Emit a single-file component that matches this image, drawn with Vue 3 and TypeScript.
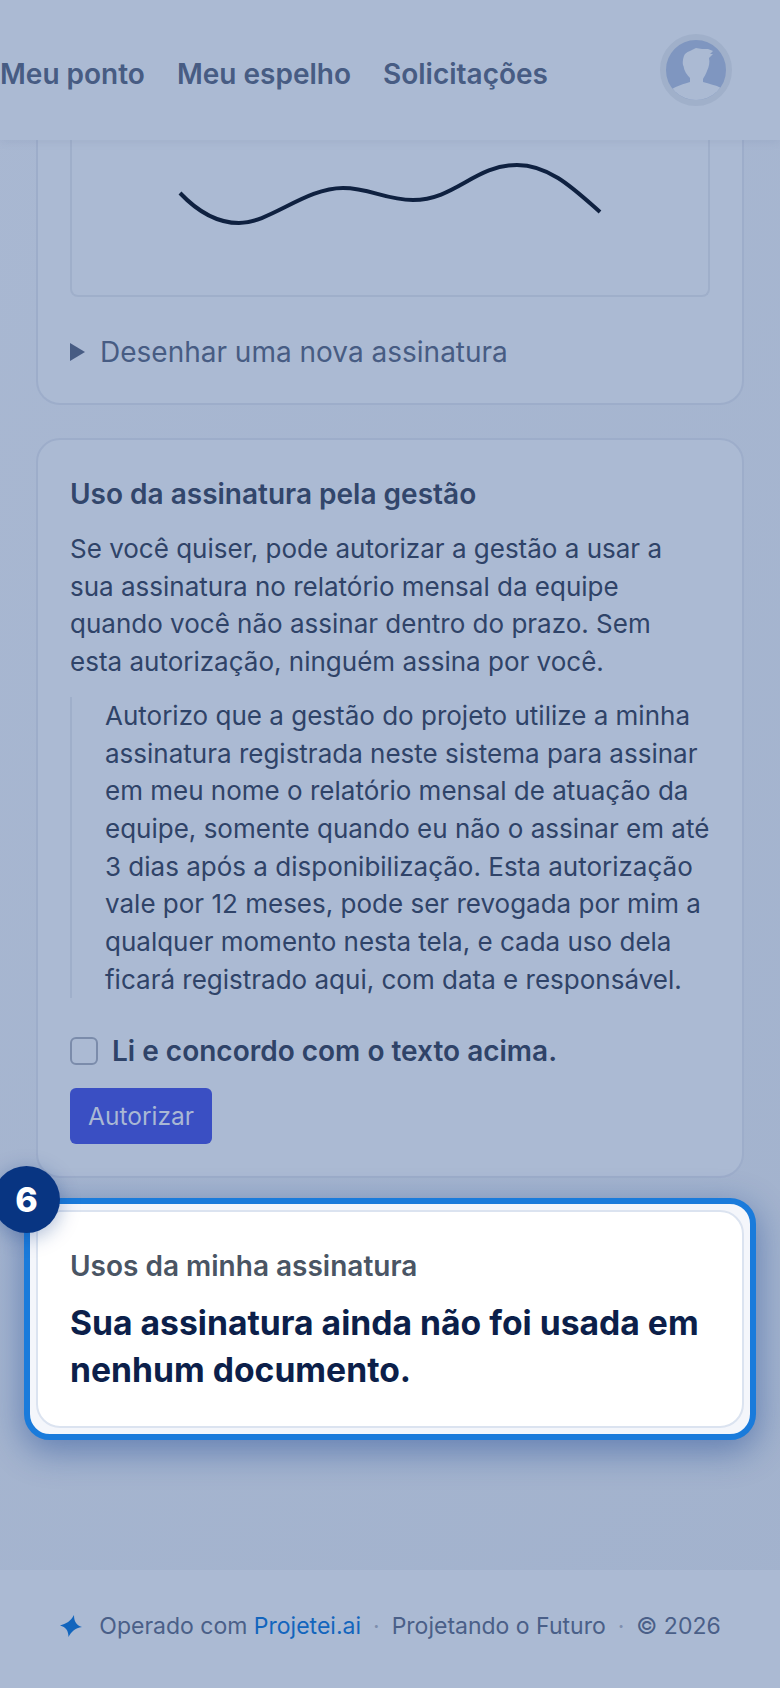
<script setup lang="ts">
const navItems: string[] = ['Meu ponto', 'Meu espelho', 'Solicitações']
</script>

<template>
  <div class="page">
    <header class="topbar">
      <nav class="nav">
        <a v-for="item in navItems" :key="item" class="nav-link">{{ item }}</a>
      </nav>
      <div class="avatar">
        <svg viewBox="0 0 60 60" width="60" height="60">
          <path d="M5 50C10 46 18 44 24 42L24 38C21 35 18 31 17.500 26C16 24 17 17 19 14C22 11 27 10 30 8C34 9 38 9 42 9L47 11L44 14L47 14L43 18C44 22 43 27 41 31C40 34 38 37 37 39L37 42C43 44 50 45 55 48L55 60L5 60Z" fill="#abbad3" />
        </svg>
      </div>
    </header>

    <main class="content">
      <section class="card card-cut">
        <div class="signature-box">
          <svg class="signature" viewBox="0 0 640 157" width="640" height="157">
            <path d="M110 53C128 72 148 83 169 83C200 83 235 48 273 48C300 48 315 60 343 60C385 60 405 25 447 25C480 25 505 50 530 72" fill="none" stroke="#0f2140" stroke-width="4" />
          </svg>
        </div>
        <div class="new-signature">
          <span class="triangle"></span>
          <span>Desenhar uma nova assinatura</span>
        </div>
      </section>

      <section class="card card-auth">
        <h2 class="auth-title">Uso da assinatura pela gestão</h2>
        <p class="auth-text">Se você quiser, pode autorizar a gestão a usar a sua assinatura no relatório mensal da equipe quando você não assinar dentro do prazo. Sem esta autorização, ninguém assina por você.</p>
        <blockquote class="auth-quote">Autorizo que a gestão do projeto utilize a minha assinatura registrada neste sistema para assinar em meu nome o relatório mensal de atuação da equipe, somente quando eu não o assinar em até 3 dias após a disponibilização. Esta autorização vale por 12 meses, pode ser revogada por mim a qualquer momento nesta tela, e cada uso dela ficará registrado aqui, com data e responsável.</blockquote>
        <label class="agree">
          <span class="checkbox"></span>
          <span>Li e concordo com o texto acima.</span>
        </label>
        <button class="authorize">Autorizar</button>
      </section>

      <div class="spot-ring">
        <span class="badge">6</span>
        <section class="card card-spot">
          <div class="spot-label">Usos da minha assinatura</div>
          <div class="spot-value">Sua assinatura ainda não foi usada em nenhum documento.</div>
        </section>
      </div>
    </main>

    <footer class="footer">
      <svg class="spark" viewBox="0 0 24 24" width="24" height="24">
        <path d="M15 1C15 7 17 11 23 13C16 14 12 18 9.500 23C9.500 17 7 13 1 11.500C7 10 12 7 15 1Z" fill="#1265bd" />
      </svg>
      <span>Operado com <a class="footer-link">Projetei.ai</a></span>
      <span class="dot">·</span>
      <span>Projetando o Futuro</span>
      <span class="dot">·</span>
      <span>© 2026</span>
    </footer>
  </div>
</template>

<style>
body {
  background: #a5b5cf;
}
</style>

<style scoped>
.page {
  display: flex;
  flex-direction: column;
  width: 780px;
  height: 1688px;
  overflow: hidden;
  background: linear-gradient(135deg, #a9b8d2, #a2b2cd);
  font-family: Inter, "Noto Sans", sans-serif;
  color: #2f4368;
}

.topbar {
  position: relative;
  z-index: 1;
  display: flex;
  flex: none;
  align-items: center;
  justify-content: space-between;
  height: 140px;
  padding: 0 48px 0 0;
  box-sizing: border-box;
  background: #abbad3;
  box-shadow: 0 2px 8px rgba(90, 110, 150, 0.12);
}

.nav {
  display: flex;
  gap: 32px;
  padding-top: 8px;
}

.nav-link {
  font-size: 28px;
  font-weight: 600;
  color: #475c83;
}

.avatar {
  display: flex;
  width: 60px;
  height: 60px;
  overflow: hidden;
  border: 6px solid #a0b0ca;
  border-radius: 50%;
  background: #7f96c0;
}

.content {
  display: flex;
  flex: 1;
  flex-direction: column;
  gap: 33px;
  padding: 0 36px;
}

.card {
  box-sizing: border-box;
  padding: 0 32px;
  border: 2px solid #9dadca;
  border-radius: 24px;
  background: #abbad3;
}

.card-cut {
  height: 265px;
  border-top: 0;
  border-radius: 0 0 24px 24px;
}

.signature-box {
  height: 157px;
  box-sizing: border-box;
  border: 2px solid #9fafca;
  border-top: 0;
  border-radius: 0 0 8px 8px;
}

.signature {
  display: block;
  margin-left: -2px;
}

.new-signature {
  display: flex;
  align-items: center;
  gap: 15px;
  margin-top: 37px;
  font-size: 28px;
  line-height: 36px;
  color: #475c83;
}

.triangle {
  width: 0;
  height: 0;
  border-top: 9px solid transparent;
  border-bottom: 9px solid transparent;
  border-left: 15px solid #475c83;
}

.card-auth {
  height: 740px;
  padding-top: 34px;
}

.auth-title {
  margin: 0;
  font-size: 28px;
  font-weight: 600;
  line-height: 40px;
  color: #32466b;
}

.auth-text {
  max-width: 610px;
  margin: 16px 0 0;
  font-size: 26px;
  line-height: 37.700px;
}

.auth-quote {
  margin: 16px 0 0;
  padding-left: 33px;
  border-left: 2px solid #9fafca;
  font-size: 26px;
  line-height: 37.700px;
}

.agree {
  display: flex;
  align-items: center;
  gap: 14px;
  margin-top: 33px;
  font-size: 28px;
  font-weight: 600;
  line-height: 40px;
}

.checkbox {
  width: 24px;
  height: 24px;
  border: 2px solid #7b8cab;
  border-radius: 6px;
}

.authorize {
  display: block;
  width: 142px;
  height: 56px;
  margin-top: 17px;
  border: 0;
  border-radius: 6px;
  background: #3a4fc3;
  font-family: inherit;
  font-size: 24.500px;
  color: #a9b8d4;
}

.spot-ring {
  position: relative;
  z-index: 2;
  margin: -13px -12px 0;
  padding: 6px;
  border: 6px solid #1a7bdb;
  border-radius: 26px;
  background: #f4f6fb;
  box-shadow: 0 10px 34px 2px rgba(15, 60, 140, 0.42);
}

.card-spot {
  height: 218px;
  padding-top: 35px;
  border-color: #dbe3f0;
  background: #fff;
}

.badge {
  position: absolute;
  top: -38px;
  left: -37px;
  display: flex;
  align-items: center;
  justify-content: center;
  width: 67px;
  height: 67px;
  border-radius: 50%;
  background: #083582;
  box-shadow: 0 4px 20px rgba(8, 53, 130, 0.35);
  font-size: 34px;
  font-weight: 800;
  color: #fff;
}

.spot-label {
  font-size: 28px;
  font-weight: 600;
  line-height: 38px;
  color: #4a5564;
}

.spot-value {
  margin-top: 15px;
  font-size: 33.700px;
  font-weight: 700;
  line-height: 46.800px;
  color: #0c1f4a;
}

.footer {
  display: flex;
  flex: none;
  align-items: center;
  justify-content: center;
  gap: 12px;
  height: 118px;
  padding-bottom: 6px;
  box-sizing: border-box;
  background: #abbad3;
  font-size: 23px;
  color: #4a5f88;
}

.footer-link {
  color: #1265bd;
}

.dot {
  color: #7f8fae;
}

.spark {
  display: block;
  margin-right: 4px;
}
</style>
